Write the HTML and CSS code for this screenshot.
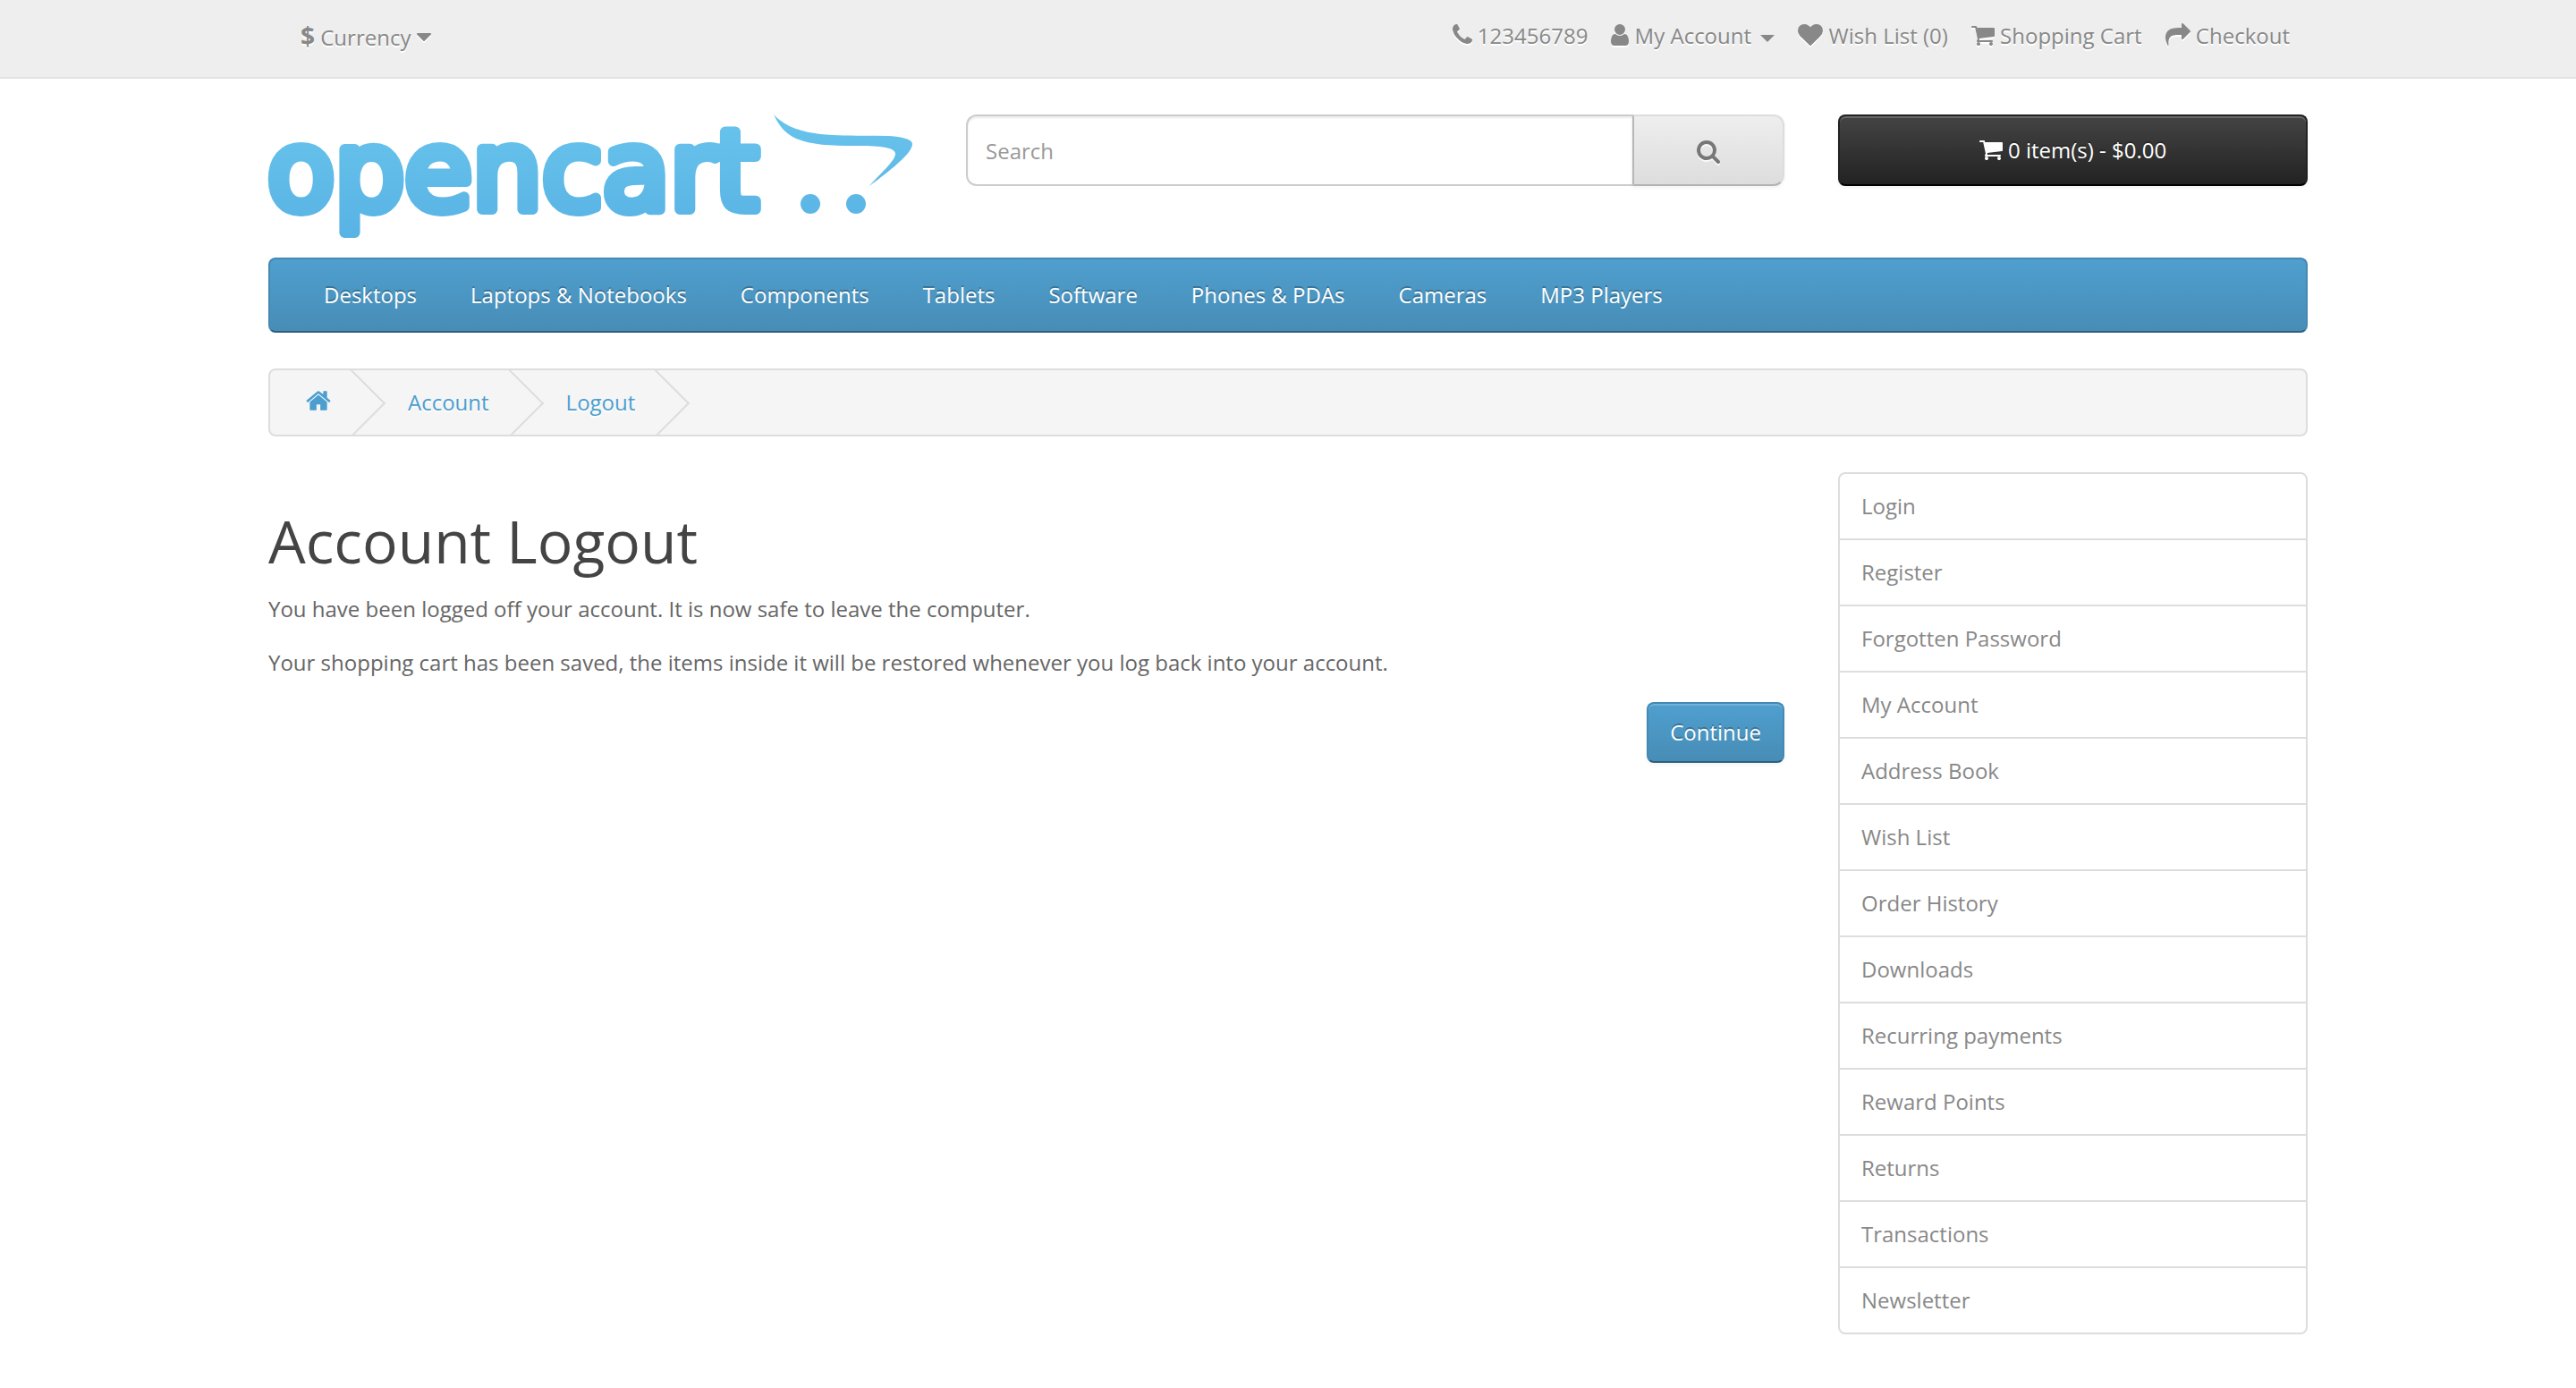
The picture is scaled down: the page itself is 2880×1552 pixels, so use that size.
FILE: index.html
```html
<!DOCTYPE html>
<html lang="en">
<head>
<meta charset="utf-8">
<meta name="viewport" content="width=device-width, initial-scale=1">
<title>Account Logout</title>
<link rel="stylesheet" href="styles.css">
</head>
<body>
<svg class="sprite" aria-hidden="true">
  <symbol id="i-caret" viewBox="384 0 1024 1792"><path d="M1408 704q0 26-19 45l-448 448q-19 19-45 19t-45-19l-448-448q-19-19-19-45t19-45 45-19h896q26 0 45 19t19 45z"/></symbol>
  <symbol id="i-phone" viewBox="192 0 1408 1792"><path d="M1600 1240q0 27-10 70.5t-21 68.5q-21 50-122 106-94 51-186 51-27 0-53-3.5t-57.5-12.5-47-14.500-55.500-20.500-49-18q-98-35-175-83-127-79-264-216t-216-264q-48-77-83-175-3-9-18-49t-20.500-55.500-14.500-47-12.500-57.500-3.500-53q0-92 51-186 56-101 106-122 25-11 68.500-21t70.500-10q14 0 21 3 18 6 53 76 11 19 30 54t35 63.500 31 53.500q3 4 17.500 25t21.500 35.500 7 28.500q0 20-28.500 50t-62 55-62 53-28.500 46q0 9 5 22.500t8.500 20.500 14 24 11.500 19q76 137 174 235t235 174q2 1 19 11.500t24 14 20.500 8.500 22.500 5q18 0 46-28.500t53-62 55-62 50-28.500q14 0 28.500 7t35.500 21.500 25 17.500q25 15 53.500 31t63.500 35 54 30q70 35 76 53 3 7 3 21z"/></symbol>
  <symbol id="i-user" viewBox="256 0 1280 1792"><path d="M1536 1399q0 109-62.500 187t-150.500 78h-854q-88 0-150.500-78t-62.500-187q0-85 8.500-160.500t31.500-152 58.500-131 94-89 134.500-34.500q131 128 313 128t313-128q76 0 134.500 34.500t94 89 58.500 131 31.500 152 8.500 160.500zm-256-887q0 159-112.500 271.500t-271.500 112.500-271.500-112.500-112.500-271.500 112.500-271.500 271.500-112.500 271.500 112.500 112.500 271.500z"/></symbol>
  <symbol id="i-heart" viewBox="0 0 1792 1792"><path d="M896 1664q-26 0-44-18l-624-602q-10-8-27.500-26t-55.500-65.500-68-97.500-53.500-121-23.500-138q0-220 127-344t351-124q62 0 126.500 21.500t120 58 95.500 68.500 76 68q36-36 76-68t95.500-68.500 120-58 126.500-21.500q224 0 351 124t127 344q0 221-229 450l-623 600q-18 18-44 18z"/></symbol>
  <symbol id="i-cart" viewBox="64 0 1664 1792"><path d="M704 1536q0 52-38 90t-90 38-90-38-38-90 38-90 90-38 90 38 38 90zm896 0q0 52-38 90t-90 38-90-38-38-90 38-90 90-38 90 38 38 90zm128-1088v512q0 24-16.500 42.500t-40.500 21.500l-1044 122q13 60 13 70 0 16-24 64h920q26 0 45 19t19 45-19 45-45 19h-1024q-26 0-45-19t-19-45q0-11 8-31.500t16-36 21.500-40 15.500-29.500l-177-823h-204q-26 0-45-19t-19-45 19-45 45-19h256q16 0 28.500 6.500t19.500 15.500 13 24.500 8 26 5.500 29.500 4.500 26h1201q26 0 45 19t19 45z"/></symbol>
  <symbol id="i-share" viewBox="0 0 1792 1792"><path d="M1792 640q0 26-19 45l-512 512q-19 19-45 19t-45-19-19-45v-256h-224q-98 0-175.500 6t-154 21.500-133 42.500-105.500 69.500-80 101-48.500 138.500-17.500 181q0 55 5 123 0 6 2.500 23.500t2.500 26.500q0 15-8.500 25t-23.500 10q-16 0-28-17-7-9-13-22t-13.500-30-10.500-24q-127-285-127-451 0-199 53-333 162-403 875-403h224v-256q0-26 19-45t45-19 45 19l512 512q19 19 19 45z"/></symbol>
  <symbol id="i-search" viewBox="64 0 1664 1792"><path d="M1216 832q0-185-131.500-316.500t-316.500-131.500-316.500 131.500-131.500 316.500 131.500 316.500 316.500 131.500 316.500-131.500 131.500-316.500zm512 832q0 52-38 90t-90 38q-54 0-90-38l-343-342q-179 124-399 124-143 0-273.500-55.500t-225-150-150-225-55.500-273.500 55.500-273.500 150-225 225-150 273.500-55.500 273.500 55.500 225 150 150 225 55.500 273.500q0 220-124 399l343 343q37 37 37 90z"/></symbol>
  <symbol id="i-home" viewBox="64 0 1664 1792"><path d="M1472 992v480q0 26-19 45t-45 19h-384v-384h-256v384h-384q-26 0-45-19t-19-45v-480q0-1 .5-3t.5-3l575-474 575 474q1 2 1 6zm223-69l-62 74q-8 9-21 11h-3q-13 0-21-7l-692-577-692 577q-12 8-24 7-13-2-21-11l-62-74q-8-10-7-23.500t11-21.500l719-599q32-26 76-26t76 26l244 204v-195q0-14 9-23t23-9h192q14 0 23 9t9 23v408l219 182q10 8 11 21.500t-7 23.500z"/></symbol>
</svg>

<nav class="top" aria-label="Account tools">
  <div class="container top-row">
    <button class="currency" type="button"><strong>$</strong> Currency <svg class="icon w16"><use href="#i-caret"/></svg></button>
    <ul class="top-links">
      <li><a href="#"><svg class="icon w22"><use href="#i-phone"/></svg></a> 123456789</li>
      <li><a href="#"><svg class="icon w20"><use href="#i-user"/></svg> My Account <span class="caret"></span></a></li>
      <li><a href="#"><svg class="icon w28"><use href="#i-heart"/></svg> Wish List (0)</a></li>
      <li><a href="#"><svg class="icon w26"><use href="#i-cart"/></svg> Shopping Cart</a></li>
      <li><a href="#"><svg class="icon w28"><use href="#i-share"/></svg> Checkout</a></li>
    </ul>
  </div>
</nav>

<header class="container grid header">
  <a class="logo" href="#">
    <svg viewBox="0 0 720 140" role="img" aria-label="opencart">
      <defs>
        <linearGradient id="sky" gradientUnits="userSpaceOnUse" x1="0" y1="0" x2="0" y2="140">
          <stop offset="0" stop-color="#68c4ec"/><stop offset="1" stop-color="#58b2e4"/>
        </linearGradient>
      </defs>
      <text class="logo-text" x="-1" y="106" fill="url(#sky)" stroke="url(#sky)">opencart</text>
      <path fill="url(#sky)" d="M565 0C574 10 589 18 611 21C636 25 665 23 693 24C710 25 720 28 720 33C720 41 706 55 672 80C683 67 701 52 701 44C701 36 680 35 656 35C628 35 607 34 590 27C577 21 570 11 565 0Z"/>
      <circle cx="606" cy="100" r="11" fill="url(#sky)"/>
      <circle cx="657" cy="100" r="11" fill="url(#sky)"/>
    </svg>
  </a>
  <form class="search">
    <input type="text" placeholder="Search" aria-label="Search">
    <button type="button" aria-label="Submit search"><svg class="icon w26"><use href="#i-search"/></svg></button>
  </form>
  <button class="cart" type="button"><svg class="icon w26"><use href="#i-cart"/></svg> 0 item(s) - $0.00</button>
</header>

<div class="container">
  <nav class="menu" aria-label="Categories">
    <a href="#">Desktops</a>
    <a href="#">Laptops &amp; Notebooks</a>
    <a href="#">Components</a>
    <a href="#">Tablets</a>
    <a href="#">Software</a>
    <a href="#">Phones &amp; PDAs</a>
    <a href="#">Cameras</a>
    <a href="#">MP3 Players</a>
  </nav>
  <ul class="breadcrumb">
    <li><a href="#" aria-label="Home"><svg class="icon home"><use href="#i-home"/></svg></a></li>
    <li><a href="#">Account</a></li>
    <li><a href="#">Logout</a></li>
  </ul>
</div>

<div class="container grid">
  <main class="content">
    <h1>Account Logout</h1>
    <p>You have been logged off your account. It is now safe to leave the computer.</p>
    <p>Your shopping cart has been saved, the items inside it will be restored whenever you log back into your account.</p>
    <div class="buttons"><a class="primary" href="#">Continue</a></div>
  </main>
  <aside>
    <nav class="list" aria-label="Account">
      <a href="#">Login</a>
      <a href="#">Register</a>
      <a href="#">Forgotten Password</a>
      <a href="#">My Account</a>
      <a href="#">Address Book</a>
      <a href="#">Wish List</a>
      <a href="#">Order History</a>
      <a href="#">Downloads</a>
      <a href="#">Recurring payments</a>
      <a href="#">Reward Points</a>
      <a href="#">Returns</a>
      <a href="#">Transactions</a>
      <a href="#">Newsletter</a>
    </nav>
  </aside>
</div>
</body>
</html>
```
FILE: styles.css
```css
* { box-sizing: border-box; }

body {
  margin: 0;
  background: #fff;
  color: #666;
  font: 400 24px/40px "Open Sans", sans-serif;
}

a { color: inherit; text-decoration: none; }
ul { list-style: none; margin: 0; padding: 0; }
button, input { font: inherit; }
button { cursor: pointer; }

.sprite { position: absolute; width: 0; height: 0; }

.container {
  max-width: 2340px;
  margin: 0 auto;
  padding: 0 30px;
}

.grid {
  display: grid;
  grid-template-columns: repeat(12, minmax(0, 1fr));
  column-gap: 60px;
  align-items: start;
}

.icon {
  height: 28px;
  vertical-align: -4px;
  fill: currentColor;
  overflow: visible;
}
.w16 { width: 16px; }
.w20 { width: 20px; }
.w22 { width: 22px; }
.w26 { width: 26px; }
.w28 { width: 28px; }
.home { width: 28px; height: 30px; }

/* Top bar */
.top {
  padding: 20px 0 22px;
  margin-bottom: 40px;
  background: #eee;
  border-bottom: 2px solid #e2e2e2;
  color: #888;
}
.top .icon { filter: drop-shadow(0 2px 0 #fff); }
.top-row {
  display: flex;
  justify-content: space-between;
  align-items: flex-start;
  text-shadow: 0 2px 0 #fff;
}
.currency {
  padding: 2px 36px;
  border: 0;
  background: none;
  color: inherit;
  text-shadow: inherit;
}
.currency strong { font-size: 28px; line-height: 1; }
.top-links {
  display: flex;
  gap: 26px;
  padding-right: 20px;
}
.caret {
  display: inline-block;
  margin-left: 4px;
  vertical-align: middle;
  border-top: 8px solid;
  border-left: 8px solid transparent;
  border-right: 8px solid transparent;
}

/* Header */
.header { margin-bottom: 20px; }
.logo { grid-column: span 4; }
.logo svg { display: block; width: 100%; overflow: visible; }
.logo-text {
  font: 400 123px "DejaVu Sans", sans-serif;
  stroke-width: 12px;
  stroke-linejoin: round;
}
.search {
  grid-column: span 5;
  display: flex;
}
.search input {
  flex: 1;
  min-width: 0;
  height: 80px;
  padding: 0 20px;
  border: 2px solid #ccc;
  border-right: 0;
  border-radius: 12px 0 0 12px;
  background: #fff;
  box-shadow: inset 0 2px 2px rgba(0, 0, 0, .075);
  color: #555;
}
.search input::placeholder { color: #999; opacity: 1; }
.search button {
  height: 80px;
  padding: 0 70px;
  border: 2px solid;
  border-color: #ddd #ddd #b3b3b3 #b7b7b7;
  border-radius: 0 12px 12px 0;
  background: linear-gradient(#eee, #ddd);
  box-shadow: 0 2px 4px rgba(0, 0, 0, .05);
  color: #777;
  font-size: 30px;
}
.search .icon { filter: drop-shadow(0 2px 0 rgba(255, 255, 255, .8)); }
.cart {
  grid-column: span 3;
  height: 80px;
  border: 2px solid;
  border-color: #222 #222 #000;
  border-radius: 8px;
  background: linear-gradient(#444, #222);
  box-shadow: inset 0 2px 0 rgba(255, 255, 255, .2), 0 2px 4px rgba(0, 0, 0, .05);
  color: #fff;
  text-shadow: 0 -2px 0 rgba(0, 0, 0, .25);
}

/* Category menu */
.menu {
  display: flex;
  flex-wrap: wrap;
  margin-bottom: 40px;
  padding: 0 30px;
  border: 2px solid;
  border-color: #4489b3 #4489b3 #2b5f7c;
  border-radius: 8px;
  background: linear-gradient(#4f9fcf, #478db6);
  color: #fff;
  text-shadow: 0 -2px 0 rgba(0, 0, 0, .25);
}
.menu a { padding: 20px 30px; }

/* Breadcrumb */
.breadcrumb {
  display: flex;
  gap: 6px;
  margin-bottom: 40px;
  border: 2px solid #ddd;
  border-radius: 8px;
  background: #f5f5f5;
  overflow: hidden;
  color: #4b9ecf;
  text-shadow: 0 2px 0 #fff;
}
.breadcrumb li {
  position: relative;
  padding: 16px 40px;
}
.breadcrumb li::after {
  content: "";
  position: absolute;
  top: 10px;
  right: -10px;
  width: 52px;
  height: 52px;
  border-top: 2px solid #ddd;
  border-right: 2px solid #ddd;
  transform: rotate(45deg);
}

/* Content */
.content { grid-column: span 9; }
h1 {
  margin: 40px 0 20px;
  color: #444;
  font-size: 66px;
  font-weight: 400;
  line-height: 73px;
}
p { margin: 0 0 20px; }
.buttons {
  display: flex;
  justify-content: flex-end;
  margin: 24px 0;
}
.primary {
  padding: 15px 24px;
  border: 2px solid;
  border-color: #4489b3 #4489b3 #2b5f7c;
  border-radius: 8px;
  background: linear-gradient(#4f9fcf, #478db6);
  box-shadow: inset 0 2px 0 rgba(255, 255, 255, .2), 0 2px 4px rgba(0, 0, 0, .05);
  color: #fff;
  line-height: 34px;
  text-shadow: 0 -2px 0 rgba(0, 0, 0, .25);
}

/* Account links */
aside { grid-column: span 3; }
.list {
  border: 2px solid #ddd;
  border-radius: 8px;
  color: #888;
}
.list a {
  display: block;
  padding: 16px 24px;
}
.list a + a { border-top: 2px solid #ddd; }
```
